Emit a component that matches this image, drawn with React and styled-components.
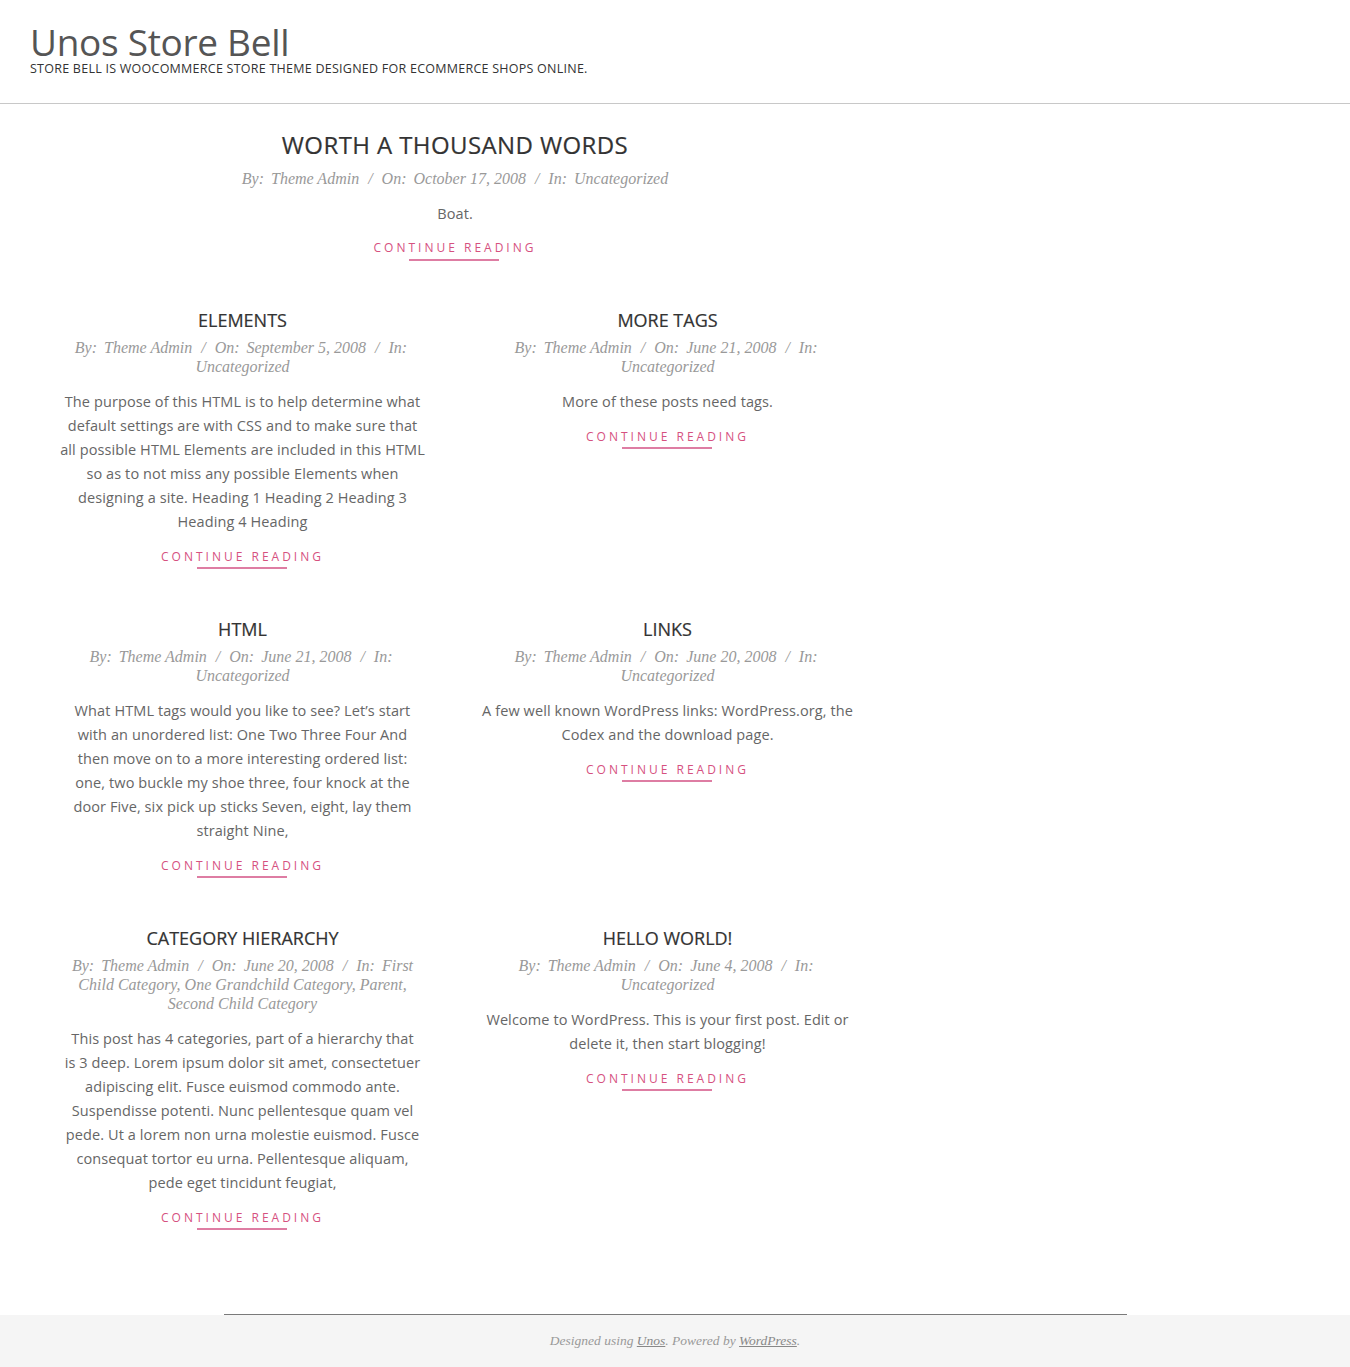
import React from 'react';
import styled, { createGlobalStyle } from 'styled-components';

const GlobalStyle = createGlobalStyle`
  html, body {
    margin: 0;
    padding: 0;
    background: #fff;
  }
  body {
    font-family: 'Open Sans', 'Liberation Sans', sans-serif;
    color: #666;
  }
  * { box-sizing: border-box; }
`;

const Page = styled.div`
  min-height: 1367px;
  display: flex;
  flex-direction: column;
`;

const Header = styled.header`
  padding: 21px 30px 26px;
  border-bottom: 1px solid #c8c8c8;
`;

const SiteTitle = styled.h1`
  margin: 0;
  font-family: 'Open Sans', 'Liberation Sans', sans-serif;
  font-weight: 400;
  font-size: 37px;
  line-height: 42px;
  color: #555;
  letter-spacing: -0.3px;
`;

const Tagline = styled.p`
  margin: -2px 0 0;
  font-size: 12.5px;
  line-height: 16px;
  text-transform: uppercase;
  color: #333;
  letter-spacing: 0.25px;
`;

const Main = styled.main`
  flex: 1;
  padding: 25px 30px 60px;
`;

const Content = styled.div`
  width: 850px;
`;

const Grid = styled.div`
  display: grid;
  grid-template-columns: 1fr 1fr;
  row-gap: 47.5px;
  margin-top: 47px;
  align-items: start;
`;

const Post = styled.article`
  text-align: center;
  padding: 0 ${p => (p.$featured ? '0' : '27px')};
`;

const PostTitle = styled.h2`
  margin: 0;
  font-family: 'Open Sans', 'Liberation Sans', sans-serif;
  font-weight: 500;
  font-size: ${p => (p.$featured ? '24px' : '18px')};
  line-height: ${p => (p.$featured ? '32px' : '24px')};
  letter-spacing: ${p => (p.$featured ? '0.4px' : '0')};
  color: #333;
  text-transform: uppercase;
  -webkit-text-stroke: 0.2px #333;
`;

const Meta = styled.div`
  margin: ${p => (p.$featured ? '8px' : '6px')} 2px 0;
  font-family: 'Liberation Serif', 'DejaVu Serif', serif;
  font-style: italic;
  font-size: 16px;
  line-height: 19px;
  color: #999;
`;

const Sep = styled.span`
  margin: 0 5px;
`;

const Label = styled.span`
  margin-right: 3px;
`;

const Excerpt = styled.p`
  margin: 14px 0 0;
  font-size: 14.5px;
  line-height: 24px;
  letter-spacing: 0.1px;
  color: #666;
`;

const Line = styled.span`
  display: block;
  white-space: nowrap;
`;

const More = styled.a`
  display: inline-block;
  margin-top: ${p => (p.$featured ? '14px' : '15px')};
  font-size: 12px;
  line-height: 16px;
  letter-spacing: 3px;
  text-transform: uppercase;
  text-decoration: none;
  color: #d6517f;
  position: relative;
  padding-bottom: 4.5px;
  &::after {
    content: '';
    position: absolute;
    left: 50%;
    bottom: 0;
    width: 90px;
    height: 2px;
    margin-left: -46px;
    background: #de7da3;
  }
`;

const Footer = styled.footer`
  display: flex;
  flex-direction: column;
  align-items: center;
`;

const FooterLine = styled.div`
  width: 903px;
  border-top: 1px solid #7a7a7a;
`;

const FooterBar = styled.div`
  align-self: stretch;
  background: #f5f5f5;
  height: 52px;
  display: flex;
  align-items: center;
  justify-content: center;
  font-family: 'Liberation Serif', 'DejaVu Serif', serif;
  font-style: italic;
  font-size: 13.5px;
  color: #999;
  a { color: #888; text-decoration: underline; }
`;

const featured = {
  title: 'Worth a Thousand Words',
  date: 'October 17, 2008',
  cats: 'Uncategorized',
  lines: ['Boat.'],
};

const posts = [
  {
    title: 'Elements',
    date: 'September 5, 2008',
    cats: 'Uncategorized',
    lines: [
      'The purpose of this HTML is to help determine what',
      'default settings are with CSS and to make sure that',
      'all possible HTML Elements are included in this HTML',
      'so as to not miss any possible Elements when',
      'designing a site. Heading 1 Heading 2 Heading 3',
      'Heading 4 Heading',
    ],
  },
  {
    title: 'More Tags',
    date: 'June 21, 2008',
    cats: 'Uncategorized',
    lines: ['More of these posts need tags.'],
  },
  {
    title: 'HTML',
    date: 'June 21, 2008',
    cats: 'Uncategorized',
    lines: [
      'What HTML tags would you like to see? Let’s start',
      'with an unordered list: One Two Three Four And',
      'then move on to a more interesting ordered list:',
      'one, two buckle my shoe three, four knock at the',
      'door Five, six pick up sticks Seven, eight, lay them',
      'straight Nine,',
    ],
  },
  {
    title: 'Links',
    date: 'June 20, 2008',
    cats: 'Uncategorized',
    lines: ['A few well known WordPress links: WordPress.org, the', 'Codex and the download page.'],
  },
  {
    title: 'Category Hierarchy',
    date: 'June 20, 2008',
    cats: 'First Child Category, One Grandchild Category, Parent, Second Child Category',
    lines: [
      'This post has 4 categories, part of a hierarchy that',
      'is 3 deep. Lorem ipsum dolor sit amet, consectetuer',
      'adipiscing elit. Fusce euismod commodo ante.',
      'Suspendisse potenti. Nunc pellentesque quam vel',
      'pede. Ut a lorem non urna molestie euismod. Fusce',
      'consequat tortor eu urna. Pellentesque aliquam,',
      'pede eget tincidunt feugiat,',
    ],
  },
  {
    title: 'Hello world!',
    date: 'June 4, 2008',
    cats: 'Uncategorized',
    lines: ['Welcome to WordPress. This is your first post. Edit or', 'delete it, then start blogging!'],
  },
];

const PostBlock = ({ post, featured }) => (
  <Post $featured={featured}>
    <PostTitle $featured={featured}>{post.title}</PostTitle>
    <Meta $featured={featured}>
      <Label>By:</Label> Theme Admin <Sep>/</Sep> <Label>On:</Label> {post.date} <Sep>/</Sep>{' '}
      <Label>In:</Label> {post.cats}
    </Meta>
    <Excerpt>
      {post.lines.map(l => (
        <Line key={l}>{l}</Line>
      ))}
    </Excerpt>
    <More href="#" $featured={featured}>Continue Reading</More>
  </Post>
);

const App = () => {
  return (
    <Page>
      <GlobalStyle />
      <Header>
        <SiteTitle>Unos Store Bell</SiteTitle>
        <Tagline>Store Bell is WooCommerce store theme designed for ecommerce shops online.</Tagline>
      </Header>
      <Main>
        <Content>
          <PostBlock featured post={featured} />
          <Grid>
            {posts.map(p => (
              <PostBlock key={p.title} post={p} />
            ))}
          </Grid>
        </Content>
      </Main>
      <Footer>
        <FooterLine />
        <FooterBar>
          <span>
            Designed using <a href="#">Unos</a>. Powered by <a href="#">WordPress</a>.
          </span>
        </FooterBar>
      </Footer>
    </Page>
  );
};

export default App;
